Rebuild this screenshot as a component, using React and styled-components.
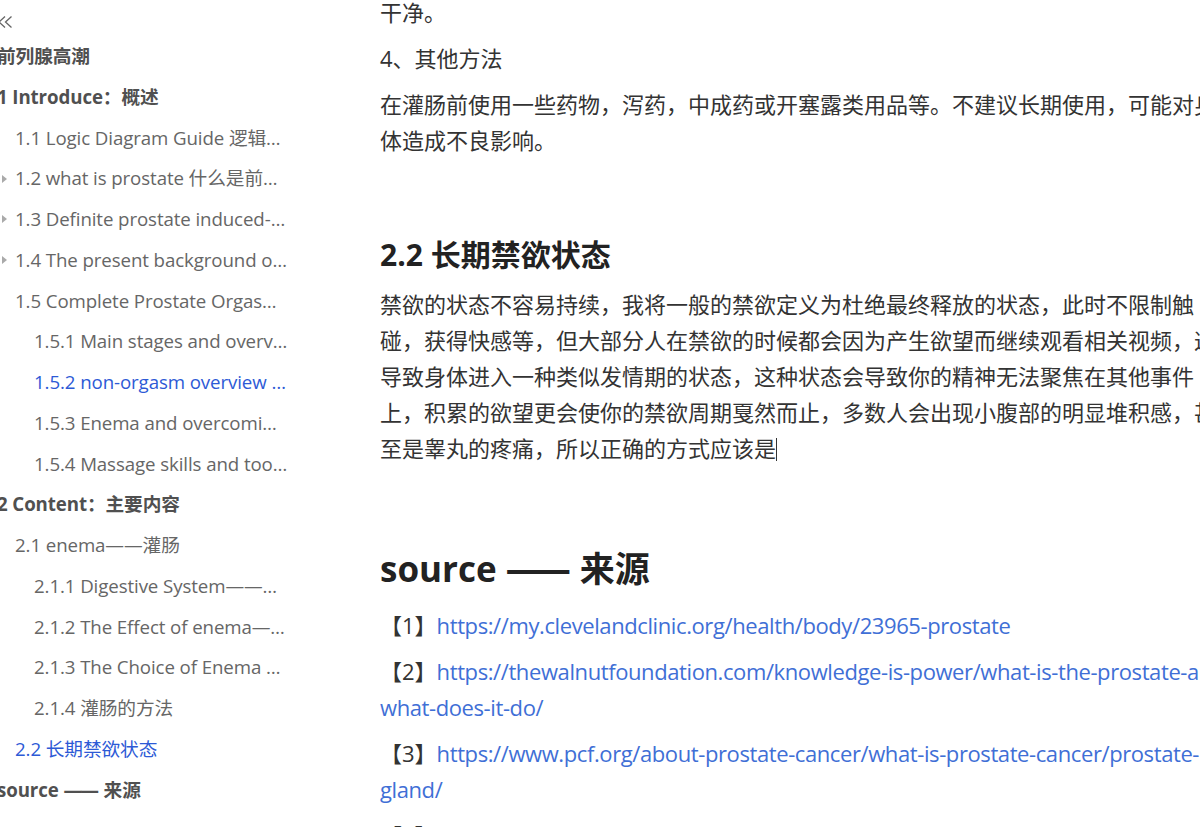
import React from "react";
import styled, { createGlobalStyle } from "styled-components";

const GlobalStyle = createGlobalStyle`
  html, body {
    margin: 0;
    padding: 0;
    background: #ffffff;
    overflow: hidden;
  }
  body {
    font-family: "Open Sans", "Noto Sans CJK SC", sans-serif;
    -webkit-font-smoothing: antialiased;
  }
`;

const Page = styled.div`
  display: flex;
  width: 1200px;
  height: 827px;
  overflow: hidden;
  background: #fff;
`;

const Sidebar = styled.nav`
  flex-shrink: 0;
  width: 291px;
  margin-left: -3px;
  display: flex;
  flex-direction: column;
`;

const CollapseBar = styled.div`
  height: 36px;
  padding-top: 11px;
  box-sizing: border-box;
  color: #666;
`;

const indent = { 1: 0, 2: 18, 3: 37 };

const OutlineItem = styled.div`
  position: relative;
  height: 40.75px;
  line-height: 40.75px;
  padding-left: ${(p) => indent[p.$level]}px;
  font-size: 18.7px;
  letter-spacing: -0.1px;
  font-weight: ${(p) => (p.$level === 1 ? 700 : 400)};
  color: ${(p) => (p.$active ? "#2d5ad6" : p.$level === 1 ? "#505050" : "#666")};
  white-space: nowrap;
  overflow: hidden;
  text-overflow: ellipsis;
`;

const Toggle = styled.span`
  position: absolute;
  left: 5px;
  top: 50%;
  margin-top: -4px;
  width: 0;
  height: 0;
  border-top: 4px solid transparent;
  border-bottom: 4px solid transparent;
  border-left: 5px solid #aaa;
`;

const Dash = styled.span`
  letter-spacing: ${(p) => p.$tight}px;
  margin-right: ${(p) => -p.$tight}px;
`;

const Main = styled.main`
  flex-shrink: 0;
  width: 846px;
  margin-left: 92px;
  display: flex;
  flex-direction: column;
  color: #333;
  font-size: 22px;
`;

const Para = styled.p`
  margin: ${(p) => (p.$first ? "-6px" : "0")} 0 10px;
  line-height: 36px;
  white-space: ${(p) => (p.$nowrap ? "nowrap" : "normal")};
`;

const SubHeading = styled.h3`
  margin: 67px 0 11px;
  font-size: 30px;
  line-height: 40px;
  font-weight: 700;
  color: #222;
`;

const SectionHeading = styled.h2`
  margin: 70px 0 15px;
  font-size: 35px;
  line-height: 46px;
  font-weight: 700;
  color: #222;
`;

const Link = styled.a`
  color: #3f6fd6;
  text-decoration: none;
  letter-spacing: -0.4px;
`;

const Cursor = styled.span`
  display: inline-block;
  width: 1px;
  height: 23px;
  background: #333;
  vertical-align: -4px;
`;

const outline = [
  { level: 1, text: "前列腺高潮" },
  { level: 1, text: "1 Introduce：概述" },
  { level: 2, text: "1.1 Logic Diagram Guide 逻辑图导引" },
  { level: 2, text: "1.2 what is prostate 什么是前列腺", toggle: true },
  { level: 2, text: "1.3 Definite prostate induced-orgasm", toggle: true },
  { level: 2, text: "1.4 The present background of research", toggle: true },
  { level: 2, text: "1.5 Complete Prostate Orgasm Process" },
  { level: 3, text: "1.5.1 Main stages and overview" },
  { level: 3, text: "1.5.2 non-orgasm overview and methods", active: true },
  { level: 3, text: "1.5.3 Enema and overcoming fear" },
  { level: 3, text: "1.5.4 Massage skills and tools overview" },
  { level: 1, text: "2 Content：主要内容" },
  { level: 2, text: "2.1 enema——灌肠" },
  { level: 3, text: "2.1.1 Digestive System——消化系统" },
  { level: 3, text: "2.1.2 The Effect of enema——灌肠的作用" },
  { level: 3, text: "2.1.3 The Choice of Enema 灌肠的选择" },
  { level: 3, text: "2.1.4 灌肠的方法" },
  { level: 2, text: "2.2 长期禁欲状态", active: true },
  { level: 1, text: "source ", dash: true, tail: " 来源" },
];

const CollapseIcon = () => (
  <svg width="16" height="12" viewBox="0 0 16 12" fill="none" stroke="currentColor" strokeWidth="1.3">
    <path d="M8 0.5 L2 6 L8 11.5" />
    <path d="M14.5 0.5 L8.5 6 L14.5 11.5" />
  </svg>
);

const App = () => {
  return (
    <>
      <GlobalStyle />
      <Page>
        <Sidebar>
          <CollapseBar>
            <CollapseIcon />
          </CollapseBar>
          {outline.map((item) => (
            <OutlineItem key={item.text} $level={item.level} $active={item.active}>
              {item.toggle && <Toggle />}
              {item.text}
              {item.dash && (
                <>
                  <Dash $tight={-2}>——</Dash>
                  {item.tail}
                </>
              )}
            </OutlineItem>
          ))}
        </Sidebar>
        <Main>
          <Para $first>干净。</Para>
          <Para>4、其他方法</Para>
          <Para>
            在灌肠前使用一些药物，泻药，中成药或开塞露类用品等。不建议长期使用，可能对身体造成不良影响。
          </Para>
          <SubHeading>2.2 长期禁欲状态</SubHeading>
          <Para>
            禁欲的状态不容易持续，我将一般的禁欲定义为杜绝最终释放的状态，此时不限制触碰，获得快感等，但大部分人在禁欲的时候都会因为产生欲望而继续观看相关视频，这导致身体进入一种类似发情期的状态，这种状态会导致你的精神无法聚焦在其他事件上，积累的欲望更会使你的禁欲周期戛然而止，多数人会出现小腹部的明显堆积感，甚至是睾丸的疼痛，所以正确的方式应该是
            <Cursor />
          </Para>
          <SectionHeading>
            source <Dash $tight={-5}>——</Dash> 来源
          </SectionHeading>
          <Para $nowrap>
            【1】<Link href="#">https://my.clevelandclinic.org/health/body/23965-prostate</Link>
          </Para>
          <Para $nowrap>
            【2】
            <Link href="#">
              https://thewalnutfoundation.com/knowledge-is-power/what-is-the-prostate-and-
              <br />
              what-does-it-do/
            </Link>
          </Para>
          <Para $nowrap>
            【3】
            <Link href="#">
              https://www.pcf.org/about-prostate-cancer/what-is-prostate-cancer/prostate-
              <br />
              gland/
            </Link>
          </Para>
          <Para $nowrap>
            【4】“Prostate Massage and Prostate Health” https://www.healthline.com/health/prostate-massage
          </Para>
        </Main>
      </Page>
    </>
  );
};

export default App;
